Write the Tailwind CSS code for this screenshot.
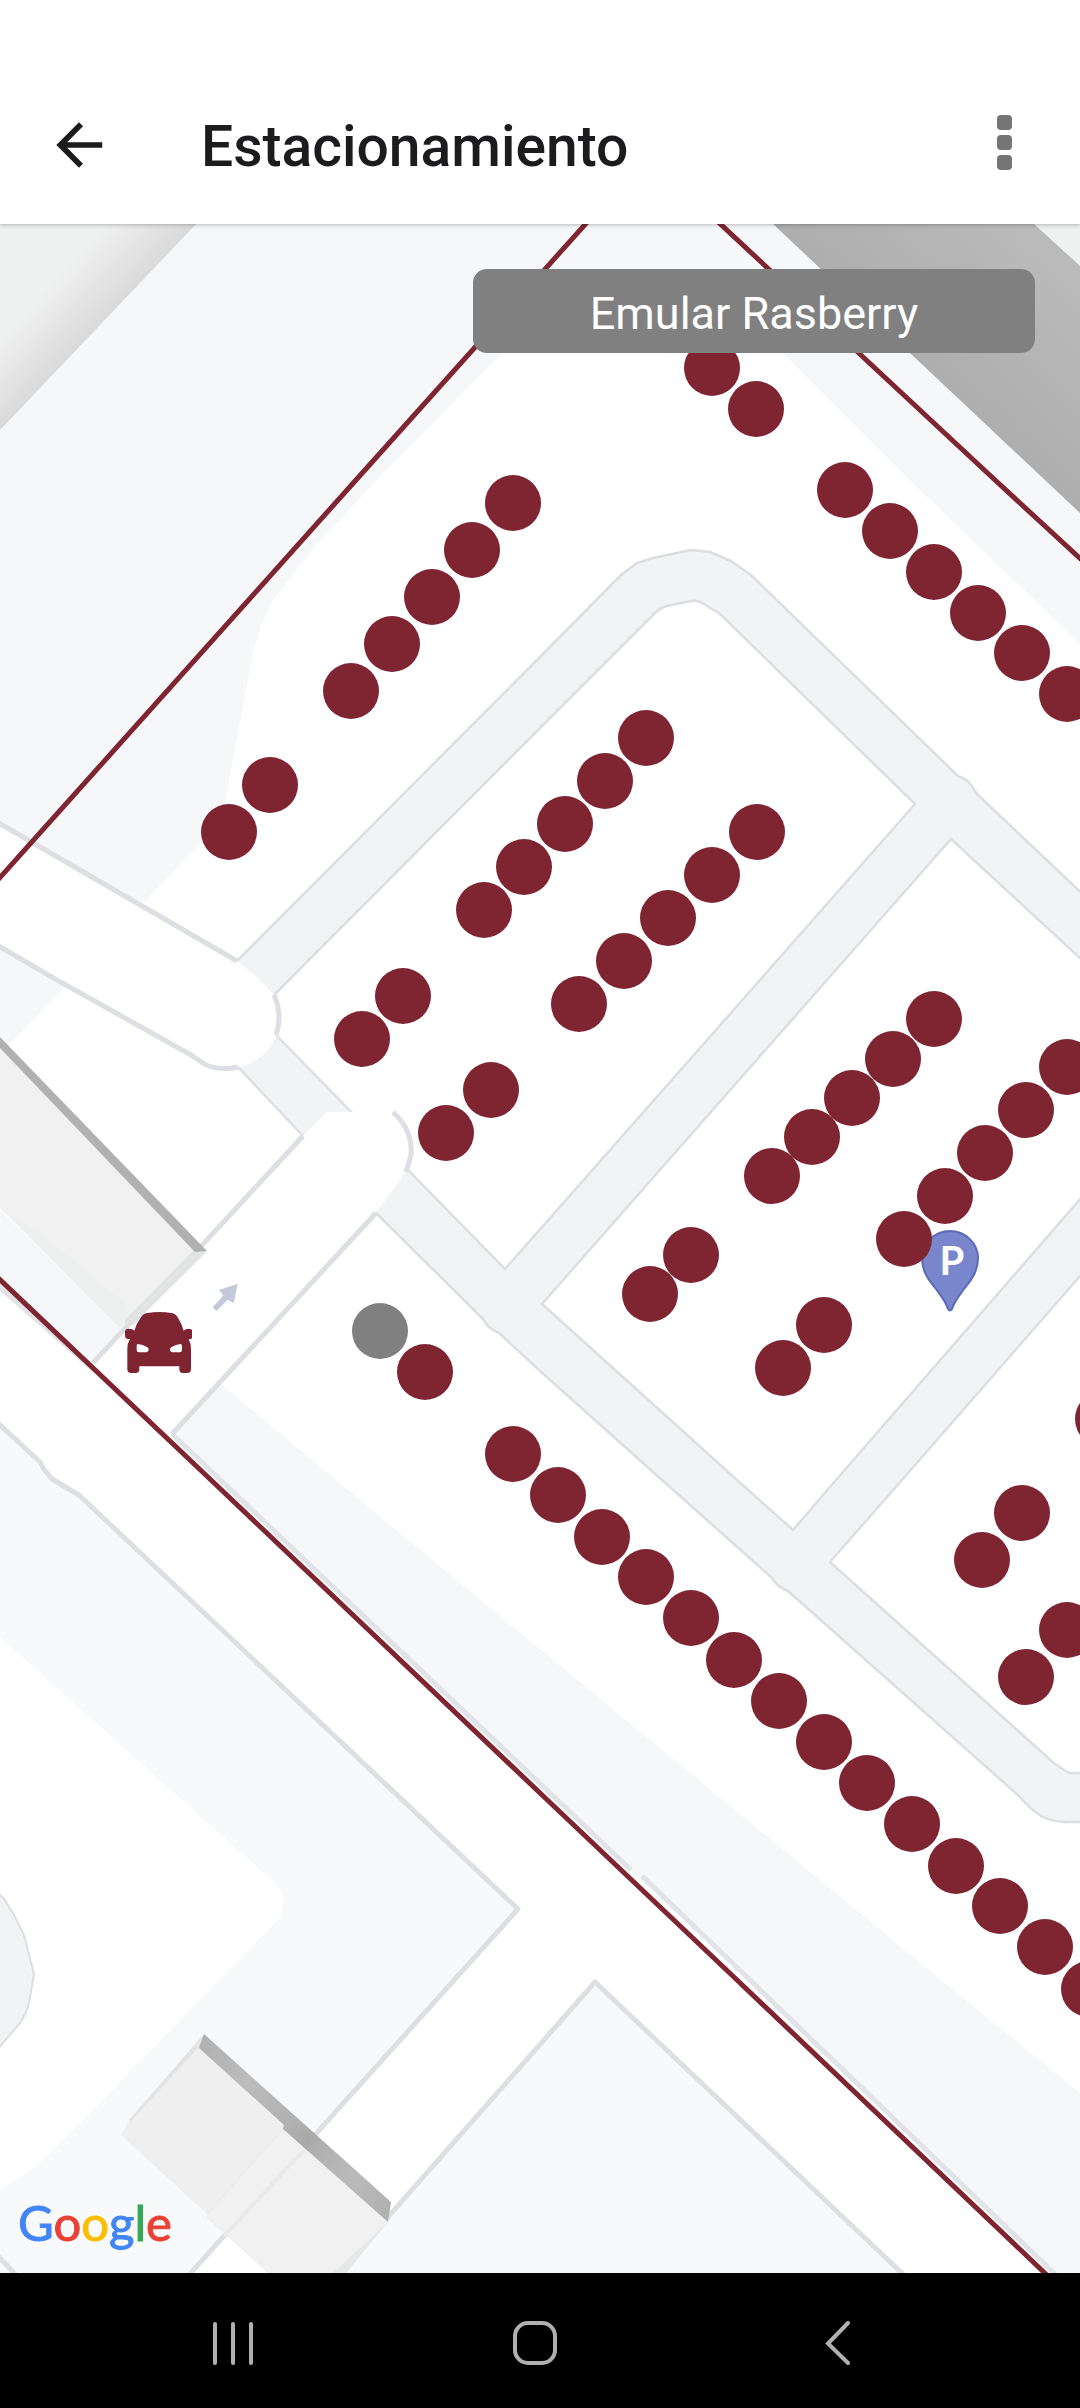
<!DOCTYPE html>
<html lang="es">
<head>
<meta charset="utf-8">
<meta name="viewport" content="width=device-width, initial-scale=1">
<title>Estacionamiento</title>
<script src="https://cdn.jsdelivr.net/npm/@tailwindcss/browser@4"></script>
</head>
<body class="flex min-h-screen flex-col bg-white font-[Roboto,sans-serif]">

<header class="relative z-10 bg-white pt-[66px] shadow-[0_1px_4px_rgba(0,0,0,0.25)]">
  <div class="flex h-[158px] items-center pr-[62px] pl-[45px]">
    <button type="button" aria-label="Volver" class="shrink-0">
      <svg class="block size-[68px] fill-[#1c1c1e]" viewBox="0 0 24 24"><path d="M20.2 11H7.83l5.59-5.59L12 4l-8 8 8 8 1.41-1.41L7.83 13H20.2z"/></svg>
    </button>
    <h1 class="ml-[88px] flex-1 pt-1 text-[57px] leading-[64px] font-medium text-[#1c1c1e]">Estacionamiento</h1>
    <button type="button" aria-label="Más opciones" class="flex w-7 shrink-0 flex-col items-center gap-[5px] pb-1.5">
      <span class="size-[15px] rounded-[4px] bg-[#757575]"></span>
      <span class="size-[15px] rounded-[4px] bg-[#757575]"></span>
      <span class="size-[15px] rounded-[4px] bg-[#757575]"></span>
    </button>
  </div>
</header>

<main class="relative min-h-[600px] flex-1 overflow-hidden bg-[#f5f7f9]">
  <svg class="absolute inset-0 size-full" viewBox="0 224 1080 2049" preserveAspectRatio="xMidYMid slice" role="img" aria-label="Mapa del estacionamiento">
    <defs>
      <linearGradient id="shadeL" gradientUnits="userSpaceOnUse" x1="55" y1="280" x2="104" y2="326">
        <stop offset="0" stop-color="#eef1f0"/><stop offset=".15" stop-color="#ededed"/><stop offset="1" stop-color="#d8d8d8"/>
      </linearGradient>
      <linearGradient id="shadeR" gradientUnits="userSpaceOnUse" x1="926" y1="369" x2="1040" y2="250">
        <stop offset="0" stop-color="#aeaeae"/><stop offset="1" stop-color="#b9bab9"/>
      </linearGradient>
      <linearGradient id="wall" gradientUnits="userSpaceOnUse" x1="204" y1="2034" x2="391" y2="2212">
        <stop offset="0" stop-color="#b0b0b0"/><stop offset=".25" stop-color="#bcbcbc"/><stop offset=".5" stop-color="#b0b0b0"/><stop offset=".58" stop-color="#a8a8a8"/><stop offset=".62" stop-color="#b0b0b0"/><stop offset=".8" stop-color="#bababa"/><stop offset="1" stop-color="#b0b0b0"/>
      </linearGradient>
      <clipPath id="carClip"><rect x="0" y="0" width="276" height="400"/></clipPath>
    </defs>

    <!-- ground -->
    <path fill="#f5f7f9" d="M-400 0H1480V2600H-400z"/>
    <path fill="#f8f9fb" d="M0 1400 1050 2400H0z"/>
    <path fill="#eef1f0" d="M0 224H196L0 430z"/>
    <path fill="url(#shadeL)" d="M96 224H196L0 430V330z"/>
    <path fill="#eef1f0" d="M1030 224H1080V270z"/>
    <path fill="url(#shadeR)" d="M773 224H1034L1080 266V513z"/>

    <!-- parking lot -->
    <path fill="#fff" d="M560 290 501 354 377 480 316 545 273 600Q257 630 251 663L225 802 203 840 0 1055V1210L119 1327 222 1385 336 1480 540 1649 941 1980 1090 2101V653L909 480 720 290z"/>

    <!-- plaza, lower left -->
    <path fill="#fff" d="M0 1637 277 1885Q284 1892 283 1900L282 1912Q282 1918 276 1922L41 2163 0 2190z"/>
    <path fill="#f1f3f5" stroke="#dcdee2" stroke-width="2" d="M-5 1890 4 1899 14 1915 24 1935 34 1974 29 2003Q26 2014 20 2023L-3 2050"/>

    <!-- lanes and blocks -->
    <g stroke="#dcdee1" stroke-width="2.5" stroke-linejoin="round">
      <path fill="#f1f3f5" d="M237 961 540 657 621 575 637 563 653 558 686 551 693 550 710 552 731 561 751 575 958 776Q966 778 971 785L977 794 1090 901V1822H1070Q1055 1823 1041 1816 1030 1809 1019 1796L788 1591Q778 1587 774 1581L771 1577 662 1480 540 1371 499 1333Q487 1328 484 1320L480 1316 376 1213 303 1136 238 1067z"/>
      <g fill="#fff">
        <path d="M274 995 540 728 655 613Q660 608 667 606L691 601Q698 600 704 604L720 614 915 804 760 980 505 1269 276 1035z"/>
        <path d="M951 839 1095 972V1182L836 1480 793 1530 737 1480 542 1304 827 980z"/>
        <path d="M1095 1259 902 1480 830 1562 1055 1764 1069 1773H1095z"/>
      </g>
    </g>

    <!-- streets -->
    <g fill="#fff">
      <path d="M0 823 237 961 258 978 274 995Q281 1015 276 1037 264 1062 238 1067 221 1070 206 1065L57 980 0 947z"/>
      <path d="M93 1363 303 1136 327 1112H397Q416 1140 406 1172L376 1213 172 1434z"/>
      <path d="M0 1285 93 1363 172 1434 1055 2273 1060 2280H910L595 1981 338 2273H191L518 1909 79 1495 67 1488 40 1462 0 1425z"/>
    </g>
    <g fill="none" stroke="#dddfe3" stroke-width="5" stroke-linejoin="round">
      <path d="M-3 822 237 961"/>
      <path d="M274 995Q283 1015 276 1035"/>
      <path d="M238 1067Q221 1071 206 1065L191 1055 57 980-3 945"/>
      <path d="M93 1363 303 1136"/>
      <path d="M393 1112Q413 1130 411 1155L406 1172"/>
      <path d="M172 1434 376 1213"/>
      <path stroke="#e2e3e7" d="M-3 1285 93 1369M172 1434 631 1870M642 1876 1057 2276"/>
      <path d="M-3 1422 40 1462Q45 1472 52 1479L67 1488 79 1495 518 1909 188 2276"/>
      <path d="M336 2276 595 1982 905 2276"/>
      <path d="M-3 2255 17 2276"/>
    </g>

    <!-- west building -->
    <path fill="#f1f1f1" d="M0 1046 195 1252H207L133 1325 119 1327 0 1208z"/>
    <path fill="#edf0ef" d="M0 1208 119 1327 133 1325 124 1303 45 1237z"/>
    <path fill="#e2e3e3" d="M207 1251H193L125 1320V1327L133 1325z"/>
    <path fill="#b1b1b1" d="M0 1037 207 1251 195 1252 0 1048z"/>

    <!-- south building -->
    <path fill="#efefef" d="M204 2034 129 2120 121 2135 207 2214V2218L268 2273H346L388 2222z"/>
    <path fill="#f1f1f1" d="M284 2128 207 2216 268 2273H338L388 2222z"/>
    <path fill="none" stroke="#e9ebeb" stroke-width="4" d="M304 2150 224 2236"/>
    <path fill="none" stroke="#eaeaea" d="M284 2128 207 2214"/>
    <path fill="#e7e8e8" d="M388 2222 346 2273H333z"/>
    <path fill="#e3e3e3" d="M204 2034 129 2120 131 2121 200 2046z"/>
    <path fill="url(#wall)" d="M204 2034 391 2202 388 2222 283 2129 284 2125 199 2048z"/>

    <!-- one-way arrow -->
    <path fill="#c5c8da" transform="translate(100 1270) scale(.3333)" d="M413 42 401 99 383 89 349 123 338 112 370 76 357 60z"/>

    <!-- property boundary -->
    <g fill="none" stroke="#7f2431" stroke-width="5">
      <path d="M-4 882 356 480 590 219"/>
      <path d="M715 219 995 480 1086 564"/>
      <path d="M-4 1276 211 1480 540 1793 737 1980 1050 2278"/>
    </g>

    <!-- parking pin -->
    <path fill="#7986cb" stroke="#5c6bb8" stroke-width="2" d="M950 1231C965 1231 978 1243 978 1258 978 1272 971 1280 964 1289 958 1297 954 1302 952 1309Q950 1312 948 1309C946 1302 942 1297 936 1289 929 1280 922 1272 922 1258 922 1243 935 1231 950 1231z"/>
    <text class="fill-white font-[Lato,sans-serif] text-[40px] font-bold" x="952" y="1275" text-anchor="middle">P</text>

    <!-- parking spaces -->
    <g fill="#7f2431">
      <circle cx="712" cy="368" r="28"/><circle cx="756" cy="409" r="28"/>
      <circle cx="845" cy="490" r="28"/><circle cx="890" cy="531" r="28"/><circle cx="934" cy="572" r="28"/><circle cx="978" cy="613" r="28"/><circle cx="1022" cy="653" r="28"/><circle cx="1067" cy="694" r="28"/>
      <circle cx="513" cy="503" r="28"/><circle cx="472" cy="550" r="28"/><circle cx="432" cy="597" r="28"/><circle cx="392" cy="644" r="28"/><circle cx="351" cy="691" r="28"/><circle cx="270" cy="785" r="28"/><circle cx="229" cy="832" r="28"/>
      <circle cx="646" cy="738" r="28"/><circle cx="605" cy="781" r="28"/><circle cx="565" cy="824" r="28"/><circle cx="524" cy="867" r="28"/><circle cx="484" cy="910" r="28"/><circle cx="403" cy="996" r="28"/><circle cx="362" cy="1039" r="28"/>
      <circle cx="757" cy="832" r="28"/><circle cx="712" cy="875" r="28"/><circle cx="668" cy="918" r="28"/><circle cx="624" cy="961" r="28"/><circle cx="579" cy="1004" r="28"/><circle cx="491" cy="1090" r="28"/><circle cx="446" cy="1133" r="28"/>
      <circle cx="934" cy="1019" r="28"/><circle cx="893" cy="1059" r="28"/><circle cx="852" cy="1098" r="28"/><circle cx="812" cy="1137" r="28"/><circle cx="772" cy="1176" r="28"/><circle cx="691" cy="1255" r="28"/><circle cx="650" cy="1294" r="28"/>
      <circle cx="1067" cy="1067" r="28"/><circle cx="1026" cy="1110" r="28"/><circle cx="985" cy="1153" r="28"/><circle cx="945" cy="1196" r="28"/><circle cx="904" cy="1239" r="28"/><circle cx="824" cy="1325" r="28"/><circle cx="783" cy="1368" r="28"/>
      <circle cx="1103" cy="1419" r="28"/><circle cx="1022" cy="1513" r="28"/><circle cx="982" cy="1560" r="28"/><circle cx="1067" cy="1630" r="28"/><circle cx="1026" cy="1677" r="28"/>
      <circle cx="380" cy="1331" r="28" fill="#808080"/><circle cx="425" cy="1372" r="28"/>
      <circle cx="513" cy="1454" r="28"/><circle cx="558" cy="1495" r="28"/><circle cx="602" cy="1537" r="28"/><circle cx="646" cy="1577" r="28"/><circle cx="691" cy="1618" r="28"/><circle cx="734" cy="1660" r="28"/><circle cx="779" cy="1701" r="28"/><circle cx="824" cy="1742" r="28"/><circle cx="867" cy="1783" r="28"/><circle cx="912" cy="1824" r="28"/><circle cx="956" cy="1866" r="28"/><circle cx="1000" cy="1906" r="28"/><circle cx="1045" cy="1947" r="28"/><circle cx="1089" cy="1989" r="28"/>
    </g>

    <!-- car -->
    <g transform="translate(100 1270) scale(.3333)">
      <g clip-path="url(#carClip)">
        <path fill="#7f2431" fill-rule="evenodd" d="M122 143Q128 131 142 129 178 123 214 129 228 131 234 143 246 162 251 182 258 175 270 177 278 178 278 186V198Q278 208 268 208L266 208Q273 220 273 236V298Q273 309 262 309H248Q238 309 238 298V289H118V298Q118 309 107 309H93Q82 309 82 298V236Q82 220 90 208 75 208 75 198V186Q75 176 86 176 98 176 103 182 109 160 122 143zM114 222Q110 222 110 227V240Q110 247 117 247H138Q146 246 146 238 146 234 141 231 128 223 114 222zM241 222Q228 223 215 231 210 234 210 238 210 246 218 247H239Q246 247 246 240V227Q246 222 241 222z"/>
      </g>
    </g>
  </svg>

  <a href="#" aria-label="Google" class="absolute bottom-[21px] left-[18px] font-[Lato,sans-serif] text-[49px] leading-[60px] [-webkit-text-stroke-width:1px] [text-shadow:0_0_3px_#fff,0_0_5px_#fff]"><span class="text-[#4285f4]">G</span><span class="text-[#e94235]">o</span><span class="text-[#fbbc04]">o</span><span class="text-[#4285f4]">g</span><span class="text-[#34a853]">l</span><span class="text-[#e94235]">e</span></a>

  <button type="button" class="absolute top-[45px] right-[45px] h-[84px] w-[562px] rounded-[14px] bg-[#808080] pt-1.5 text-[45px] leading-[52px] text-white">Emular Rasberry</button>
</main>

<nav aria-label="Navegación del sistema" class="grid h-[135px] grid-cols-3 items-center justify-items-center bg-black pt-1 pr-[92px] pl-[82px]">
  <button type="button" aria-label="Recientes" class="p-1"><svg class="block size-11 fill-[#b0b0b0]" viewBox="0 0 44 44"><rect x="2" y="1" width="4" height="43" rx="2"/><rect x="20" y="1" width="4" height="43" rx="2"/><rect x="38" y="1" width="4" height="43" rx="2"/></svg></button>
  <button type="button" aria-label="Inicio" class="p-1"><svg class="block size-11 fill-none stroke-[#b0b0b0] stroke-4" viewBox="0 0 44 44"><rect x="2" y="2" width="40" height="40" rx="13"/></svg></button>
  <button type="button" aria-label="Atrás" class="p-1"><svg class="block size-11 fill-none stroke-[#b0b0b0] stroke-4" stroke-linecap="round" viewBox="0 0 44 44"><path d="M33 2 13 22.500 33 42"/></svg></button>
</nav>
</body>
</html>
